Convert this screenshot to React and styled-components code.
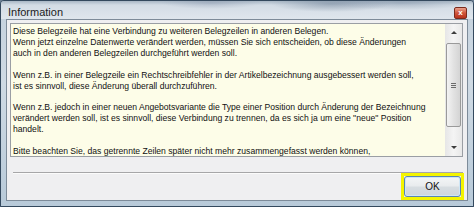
import styled, { createGlobalStyle } from "styled-components";

const GlobalStyle = createGlobalStyle`
  html, body {
    margin: 0;
    padding: 0;
    background: #6f8296;
  }
  body {
    font-family: "Liberation Sans", Arial, sans-serif;
  }
`;

const Window = styled.div`
  width: 474px;
  height: 207px;
  box-sizing: border-box;
  border: 1px solid #34495e;
  border-radius: 4px 4px 0 0;
  background: linear-gradient(to bottom, #c4d1dd 0%, #cfdae4 40%, #b8cad9 100%);
  display: flex;
  flex-direction: column;
  overflow: hidden;
`;

const TitleBar = styled.div`
  height: 18px;
  display: flex;
  align-items: center;
  justify-content: space-between;
  padding: 0 6px 0 7px;
  background:
    radial-gradient(ellipse 60px 8px at 330px 3px, rgba(90, 110, 135, 0.45), transparent),
    radial-gradient(ellipse 50px 6px at 210px 2px, rgba(120, 135, 160, 0.35), transparent),
    radial-gradient(ellipse 70px 7px at 400px 2px, rgba(100, 120, 145, 0.35), transparent),
    linear-gradient(to bottom, #a9b7c5 0px, #d3dce5 4px, #dfe6ed 100%);
`;

const Title = styled.span`
  font-size: 11px;
  color: #1c1c1c;
  padding-top: 4px;
`;

const CloseButton = styled.div`
  width: 13px;
  height: 12px;
  margin-top: 6px;
  box-sizing: border-box;
  border: 1px solid #7a2a1c;
  border-radius: 2px;
  background: linear-gradient(to bottom, #e9a08c 0%, #d0553a 50%, #b8321c 100%);
  color: #fff;
  font-size: 8px;
  font-weight: bold;
  line-height: 10px;
  text-align: center;
`;

const Client = styled.div`
  flex: 1;
  margin: 0 5px 5px 5px;
  border: 1px solid #7d8b99;
  background: #efeff1;
  display: flex;
  flex-direction: column;
  padding: 3px 4px 0 3px;
`;

const MessageBox = styled.div`
  height: 134px;
  box-sizing: border-box;
  border: 1px solid #9a9ea4;
  background: #fdfde8;
  display: flex;
  overflow: hidden;
`;

const MessageText = styled.div`
  flex: 1;
  padding: 2px 0 0 2px;
  font-size: 8.6px;
  line-height: 10.9px;
  color: #111;
  white-space: pre;
  overflow: hidden;
`;

const ScrollBar = styled.div`
  width: 17px;
  display: flex;
  flex-direction: column;
  background: linear-gradient(to right, #e6e6e6, #f4f4f4 50%, #e8e8e8);
`;

const ScrollArrow = styled.div`
  height: 17px;
  display: flex;
  align-items: center;
  justify-content: center;
`;

const Triangle = styled.div`
  width: 0;
  height: 0;
  border-left: 3px solid transparent;
  border-right: 3px solid transparent;
  ${(p) =>
    p.down
      ? "border-top: 3px solid #3c3c3c;"
      : "border-bottom: 3px solid #3c3c3c;"}
`;

const ScrollTrack = styled.div`
  flex: 1;
  padding: 2px 1px 0 1px;
`;

const ScrollThumb = styled.div`
  height: 84px;
  box-sizing: border-box;
  border: 1px solid #9a9a9a;
  border-radius: 2px;
  background: linear-gradient(to right, #f3f3f3, #e2e2e2 50%, #d4d4d4);
  display: flex;
  flex-direction: column;
  align-items: center;
  justify-content: center;
  gap: 1px;
`;

const Grip = styled.div`
  width: 5px;
  height: 1px;
  background: #6b6b6b;
`;

const Separator = styled.div`
  margin-top: 15px;
  margin-left: 3px;
  height: 1px;
  background: #a6a6a8;
  border-bottom: 1px solid #fbfbfb;
`;

const ButtonRow = styled.div`
  display: flex;
  justify-content: flex-end;
  padding-right: 0;
  margin-top: -1px;
`;

const FocusRing = styled.div`
  width: 63px;
  height: 27px;
  box-sizing: border-box;
  border: 3px solid #f4f400;
  margin-right: -1px;
`;

const Button = styled.div`
  height: 100%;
  box-sizing: border-box;
  border: 1px solid #5a87ae;
  border-radius: 3px;
  background: linear-gradient(to bottom, #f4f6f7 0%, #e9ecee 45%, #d7dde1 55%, #cfd6db 100%);
  box-shadow: inset 0 0 0 1px #cfe6f5;
  font-size: 10px;
  line-height: 19px;
  text-align: center;
  color: #111;
`;

const lines = [
  "Diese Belegzeile hat eine Verbindung zu weiteren Belegzeilen in anderen Belegen.",
  "Wenn jetzt einzelne Datenwerte verändert werden, müssen Sie sich entscheiden, ob diese Änderungen",
  "auch in den anderen Belegzeilen durchgeführt werden soll.",
  "",
  "Wenn z.B. in einer Belegzeile ein Rechtschreibfehler in der Artikelbezeichnung ausgebessert werden soll,",
  "ist es sinnvoll, diese Änderung überall durchzuführen.",
  "",
  "Wenn z.B. jedoch in einer neuen Angebotsvariante die Type einer Position durch Änderung der Bezeichnung",
  'verändert werden soll, ist es sinnvoll, diese Verbindung zu trennen, da es sich ja um eine "neue" Position',
  "handelt.",
  "",
  "Bitte beachten Sie, das getrennte Zeilen später nicht mehr zusammengefasst werden können,",
];

export default function App() {
  return (
    <>
      <GlobalStyle />
      <Window>
        <TitleBar>
          <Title>Information</Title>
          <CloseButton>x</CloseButton>
        </TitleBar>
        <Client>
          <MessageBox>
            <MessageText>{lines.join("\n")}</MessageText>
            <ScrollBar>
              <ScrollArrow>
                <Triangle />
              </ScrollArrow>
              <ScrollTrack>
                <ScrollThumb>
                  <Grip />
                  <Grip />
                  <Grip />
                </ScrollThumb>
              </ScrollTrack>
              <ScrollArrow>
                <Triangle down />
              </ScrollArrow>
            </ScrollBar>
          </MessageBox>
          <Separator />
          <ButtonRow>
            <FocusRing>
              <Button>OK</Button>
            </FocusRing>
          </ButtonRow>
        </Client>
      </Window>
    </>
  );
}
